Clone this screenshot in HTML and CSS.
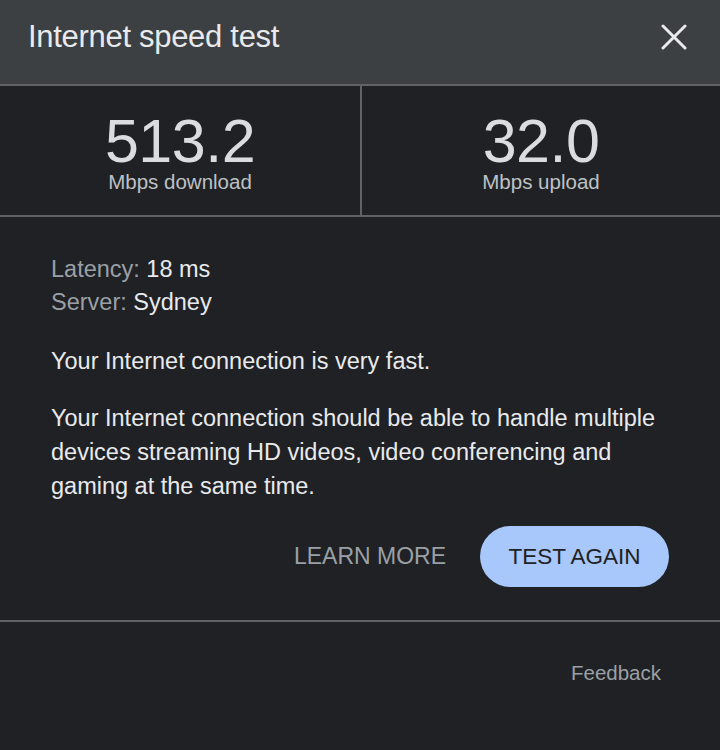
FILE: index.html
```html
<!DOCTYPE html>
<html>
<head>
    <title>Internet speed test</title>
    <meta charset="UTF-8">
    <meta name="viewport" content="width=device-width, initial-scale=1.0">
    <link rel="stylesheet" href="styles.css">
</head>
<body>
    <div class="panel">
        <div class="header">
            <h1>Internet speed test</h1>
            <button class="close-button" aria-label="Close">
                <svg width="26" height="26" viewBox="0 0 26 26">
                    <path d="M2 2 L24 24 M24 2 L2 24" stroke="#e8eaed" stroke-width="3" stroke-linecap="round"/>
                </svg>
            </button>
        </div>

        <div class="stats">
            <div class="stat">
                <div class="stat-value">513.2</div>
                <div class="stat-label">Mbps download</div>
            </div>
            <div class="stat">
                <div class="stat-value">32.0</div>
                <div class="stat-label">Mbps upload</div>
            </div>
        </div>

        <div class="details">
            <div class="meta">
                <div><span class="meta-key">Latency:</span> 18 ms</div>
                <div><span class="meta-key">Server:</span> Sydney</div>
            </div>
            <p>Your Internet connection is very fast.</p>
            <p>Your Internet connection should be able to handle multiple devices streaming HD videos, video conferencing and gaming at the same time.</p>

            <div class="actions">
                <button class="text-button">LEARN MORE</button>
                <button class="pill-button">TEST AGAIN</button>
            </div>
        </div>

        <div class="footer">
            <a class="feedback">Feedback</a>
        </div>
    </div>
</body>
</html>
```

FILE: styles.css
```css
* {
    margin: 0;
    padding: 0;
    box-sizing: border-box;
}

body {
    font-family: 'Liberation Sans', Arial, sans-serif;
    background: #202124;
    color: #e8eaed;
    width: 720px;
    height: 750px;
    overflow: hidden;
}

.panel {
    display: flex;
    flex-direction: column;
    height: 750px;
}

.header {
    background: #3c4043;
    height: 84px;
    display: flex;
    align-items: center;
    justify-content: space-between;
    padding: 0 33px 10px 28px;
}

.header h1 {
    font-size: 31px;
    font-weight: 400;
    letter-spacing: -0.3px;
}

.close-button {
    background: none;
    border: none;
    display: flex;
}

.stats {
    display: grid;
    grid-template-columns: 1fr 1fr;
    border-top: 2px solid #5f6368;
    border-bottom: 2px solid #5f6368;
    height: 133px;
}

.stat {
    display: flex;
    flex-direction: column;
    align-items: center;
    padding-top: 24px;
}

.stat + .stat {
    border-left: 2px solid #5f6368;
}

.stat-value {
    font-size: 61px;
    line-height: 62px;
    color: #dadce0;
    letter-spacing: -0.5px;
}

.stat-label {
    font-size: 20.5px;
    line-height: 20px;
    color: #bdc1c6;
}

.details {
    padding: 36px 51px 0;
    font-size: 23.5px;
    line-height: 34px;
}

.meta {
    line-height: 33px;
    margin-bottom: 25px;
}

.meta-key {
    color: #9aa0a6;
}

.details p {
    margin-bottom: 23px;
}

.actions {
    display: flex;
    justify-content: flex-end;
    align-items: center;
    gap: 34px;
    margin-top: 3px;
}

.text-button {
    background: none;
    border: none;
    font-family: inherit;
    font-size: 23px;
    color: #9aa0a6;
}

.pill-button {
    background: #a8c7fa;
    color: #202124;
    border: none;
    border-radius: 31px;
    font-family: inherit;
    font-size: 22.5px;
    width: 189px;
    height: 61px;
}

.footer {
    margin-top: 33px;
    border-top: 2px solid #5f6368;
    display: flex;
    justify-content: flex-end;
    padding: 39px 59px 0;
}

.feedback {
    font-size: 20.5px;
    color: #9aa0a6;
}
```
